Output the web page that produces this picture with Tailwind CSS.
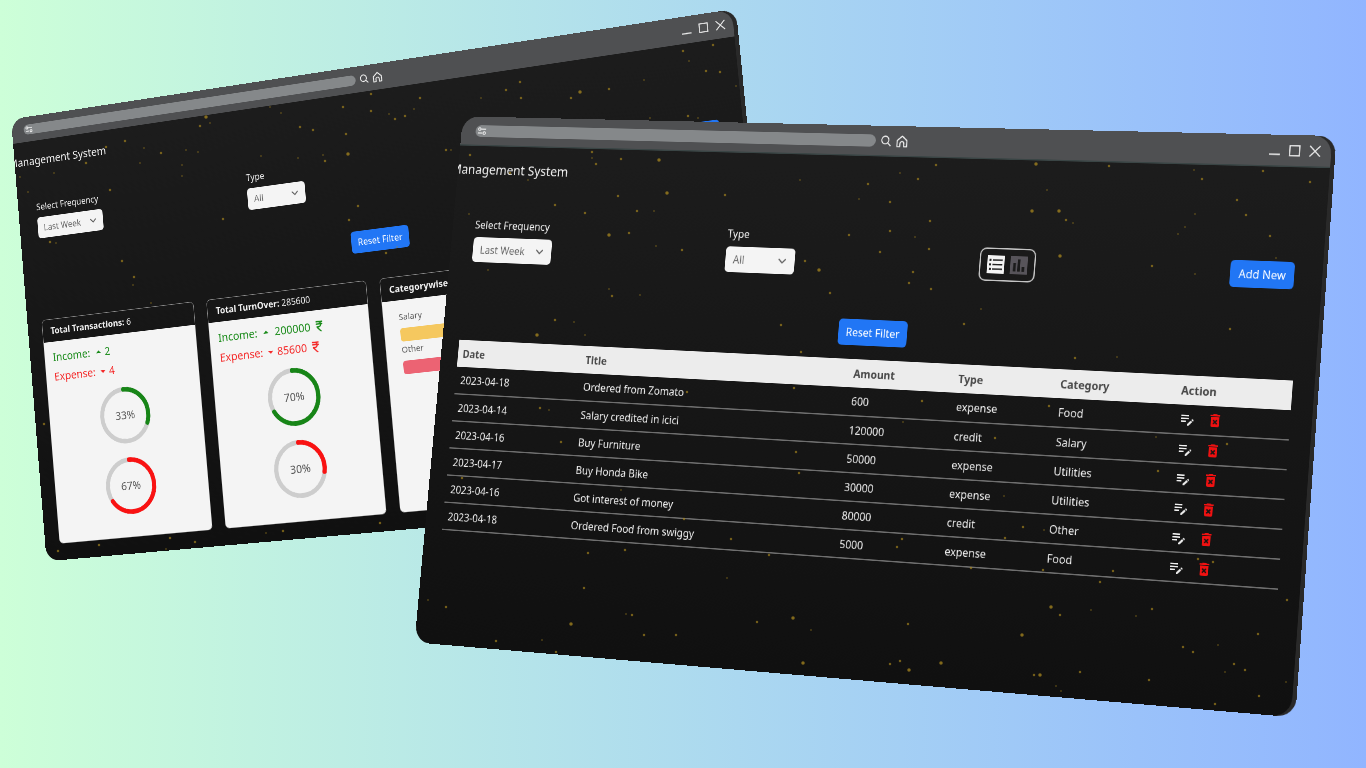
<!DOCTYPE html>
<html lang="en">
<head>
<meta charset="utf-8">
<meta name="viewport" content="width=device-width, initial-scale=1">
<title>Expense Management System</title>
<script src="https://cdn.jsdelivr.net/npm/@tailwindcss/browser@4"></script>
</head>
<body>
<svg class="hidden" aria-hidden="true">
  <symbol id="i-tune" viewBox="0 0 16 14"><g fill="none" stroke="#f1f1f1" stroke-width="1.6"><circle cx="4" cy="4" r="2"/><path d="M7 4h8M1 10h7"/><circle cx="12" cy="10" r="2"/></g></symbol>
  <symbol id="i-search" viewBox="0 0 16 16"><g fill="none" stroke="#f1f1f1" stroke-width="1.7"><circle cx="6.8" cy="6.8" r="5.6"/><path d="M10.8 10.8l4.6 4.6"/></g></symbol>
  <symbol id="i-home" viewBox="0 0 18 18"><path fill="none" stroke="#f1f1f1" stroke-width="1.7" stroke-linejoin="round" d="M1.5 8L9 1.5 16.500 8v9h-4.500v-4.500a3 3 0 0 0-6 0V17H1.500z"/></symbol>
  <symbol id="i-min" viewBox="0 0 16 16"><path stroke="#f1f1f1" stroke-width="1.800" d="M0 13.500h16"/></symbol>
  <symbol id="i-max" viewBox="0 0 16 16"><rect x="1" y="1" width="14" height="14" fill="none" stroke="#f1f1f1" stroke-width="1.700"/></symbol>
  <symbol id="i-close" viewBox="0 0 16 16"><path fill="none" stroke="#f1f1f1" stroke-width="1.700" d="M.5.5l15 15M15.500.5l-15 15"/></symbol>
  <symbol id="i-chev" viewBox="0 0 16 16"><path fill="none" stroke="#666" stroke-width="2" stroke-linecap="round" stroke-linejoin="round" d="M3 5.500l5 5 5-5"/></symbol>
  <symbol id="i-up" viewBox="0 0 24 24"><path fill="currentColor" d="M7 14l5-5 5 5z"/></symbol>
  <symbol id="i-down" viewBox="0 0 24 24"><path fill="currentColor" d="M7 10l5 5 5-5z"/></symbol>
  <symbol id="i-rupee" viewBox="0 0 24 24"><path fill="currentColor" stroke="currentColor" stroke-width=".5" d="M13.660 7c-.56-1.180-1.760-2-3.160-2H6V3h12v2h-3.260c.48.58.84 1.260 1.050 2H18v2h-2.020c-.25 2.800-2.610 5-5.480 5h-.73l6.730 7h-2.770L7 14v-2h3.500c1.760 0 3.220-1.300 3.460-3H6V7h7.660z"/></symbol>
  <symbol id="i-edit" viewBox="0 0 24 24"><path fill="#efefef" d="M3 10h11v2H3v-2zm0-2h11V6H3v2zm0 8h7v-2H3v2zm15.010-3.130.71-.71c.39-.39 1.020-.39 1.410 0l.71.71c.39.39.39 1.020 0 1.410l-.71.71-2.120-2.120zm-.71.71-5.300 5.300V21h2.120l5.300-5.300-2.120-2.120z"/></symbol>
  <symbol id="i-trash" viewBox="0 0 24 24"><path fill="#f01111" d="M6 19c0 1.100.9 2 2 2h8c1.100 0 2-.9 2-2V7H6v12zm2.460-7.120 1.410-1.410L12 12.590l2.120-2.120 1.410 1.410L13.410 14l2.120 2.120-1.410 1.410L12 15.410l-2.120 2.120-1.410-1.410L10.590 14l-2.130-2.120zM15.500 4l-1-1h-5l-1 1H5v2h14V4z"/></symbol>
</svg>

<main class="relative min-h-screen overflow-hidden bg-linear-to-r from-[#cdffd8] to-[#91b5ff] font-['Noto_Sans','Open_Sans',sans-serif] text-base text-[#f2f2f2]">

  <!-- Analytics window -->
  <section aria-label="Analytics view" class="absolute top-0 left-0 h-[800px] w-[1366px] origin-top-left overflow-hidden rounded-[26px] bg-[#292929] [transform:matrix3d(0.479612,-0.0815666,0,-0.00006928,0.043725,0.544675,0,-0.00001395,0,0,1,0,11.1,119.3,0,1)]">
    <div class="mr-[7px] flex h-full flex-col overflow-hidden rounded-[26px] bg-linear-to-b from-[#1d1d1d] to-[#101010]">
      <header class="flex h-[45px] shrink-0 items-center bg-[#4f5052] pr-[14px] pl-6">
        <div class="flex h-[18px] w-[657px] items-center rounded-full bg-[#85888a] pl-[3px]"><svg class="h-[14px] w-4"><use href="#i-tune"/></svg></div>
        <button aria-label="Search" class="ml-2"><svg class="size-4"><use href="#i-search"/></svg></button>
        <button aria-label="Home" class="ml-2"><svg class="size-[18px]"><use href="#i-home"/></svg></button>
        <div class="ml-auto flex gap-[13px]">
          <button aria-label="Minimize"><svg class="size-4"><use href="#i-min"/></svg></button>
          <button aria-label="Maximize"><svg class="size-4"><use href="#i-max"/></svg></button>
          <button aria-label="Close"><svg class="size-4"><use href="#i-close"/></svg></button>
        </div>
      </header>
      <nav class="flex h-[72px] items-center"><a href="#" class="-ml-3 text-xl">Management System</a></nav>
      <div class="mt-9 mr-10 ml-[37px] flex h-[85px] items-center justify-between">
        <div class="self-start"><label for="freq-a" class="block h-[31px] leading-6">Select Frequency</label>
          <div class="relative w-[133px]"><select id="freq-a" class="h-[38px] w-full appearance-none rounded-md bg-[#f4f4f4] px-3 text-[#6a6a6a]"><option>Last Week</option></select><svg class="pointer-events-none absolute top-[11px] right-3 size-4"><use href="#i-chev"/></svg></div></div>
        <div class="self-start"><label for="type-a" class="block h-[31px] leading-6">Type</label>
          <div class="relative w-[111px]"><select id="type-a" class="h-[38px] w-full appearance-none rounded-md bg-[#f4f4f4] px-3 text-[#6a6a6a]"><option>All</option></select><svg class="pointer-events-none absolute top-[11px] right-3 size-4"><use href="#i-chev"/></svg></div></div>
        <div class="w-[85px]"></div>
        <button class="h-[38px] rounded-md bg-[#2176f5] px-3 text-white">Add New</button>
      </div>
      <div class="mt-[45px] flex justify-center pl-[41px]"><button class="h-[38px] rounded-md bg-[#2176f5] px-3 text-white">Reset Filter</button></div>

      <div class="mt-12 mr-[30px] ml-[29px] grid grid-cols-4 gap-[25px]">
        <article class="flex h-[402px] flex-col overflow-hidden rounded-lg border border-[#8d8d8d]">
          <h2 class="h-10 shrink-0 px-4 py-2 leading-6"><b>Total Transactions:</b> 6</h2>
          <div class="grow bg-[#f4f4f4] p-4">
            <p class="flex h-6 items-center text-xl text-[#178a17]">Income: <svg class="ml-[5px] size-6"><use href="#i-up"/></svg><span>2</span></p>
            <p class="mt-[11px] flex h-6 items-center text-xl text-[#f42a2a]">Expense: <svg class="ml-[3px] size-6"><use href="#i-down"/></svg><span>4</span></p>
            <svg viewBox="0 0 100 100" class="mx-auto mt-5 size-[100px] text-xl" role="img" aria-label="33 percent"><circle cx="50" cy="50" r="46" fill="none" stroke="#cdcdcd" stroke-width="8"/><circle cx="50" cy="50" r="46" fill="none" stroke="#178517" stroke-width="8" stroke-linecap="round" pathLength="100" stroke-dasharray="31 100" transform="rotate(-90 50 50)"/><text x="50" y="57" text-anchor="middle" fill="#555">33%</text></svg>
            <svg viewBox="0 0 100 100" class="mx-auto mt-[25px] size-[100px] text-xl" role="img" aria-label="67 percent"><circle cx="50" cy="50" r="46" fill="none" stroke="#cdcdcd" stroke-width="8"/><circle cx="50" cy="50" r="46" fill="none" stroke="#f91212" stroke-width="8" stroke-linecap="round" pathLength="100" stroke-dasharray="66 100" transform="rotate(-90 50 50)"/><text x="50" y="57" text-anchor="middle" fill="#555">67%</text></svg>
          </div>
        </article>
        <article class="flex h-[402px] flex-col overflow-hidden rounded-lg border border-[#8d8d8d]">
          <h2 class="h-10 shrink-0 px-4 py-2 leading-6"><b>Total TurnOver:</b> 285600</h2>
          <div class="grow bg-[#f4f4f4] p-4">
            <p class="flex h-6 items-center text-xl text-[#178a17]">Income: <svg class="ml-[5px] size-6"><use href="#i-up"/></svg><span class="ml-1">200000</span><svg class="ml-[5px] size-6"><use href="#i-rupee"/></svg></p>
            <p class="mt-[11px] flex h-6 items-center text-xl text-[#f42a2a]">Expense: <svg class="ml-[3px] size-6"><use href="#i-down"/></svg><span>85600</span><svg class="ml-[5px] size-6"><use href="#i-rupee"/></svg></p>
            <svg viewBox="0 0 100 100" class="mx-auto mt-5 size-[100px] text-xl" role="img" aria-label="70 percent"><circle cx="50" cy="50" r="46" fill="none" stroke="#cdcdcd" stroke-width="8"/><circle cx="50" cy="50" r="46" fill="none" stroke="#178517" stroke-width="8" stroke-linecap="round" pathLength="100" stroke-dasharray="67 100" transform="rotate(-90 50 50)"/><text x="50" y="57" text-anchor="middle" fill="#555">70%</text></svg>
            <svg viewBox="0 0 100 100" class="mx-auto mt-[25px] size-[100px] text-xl" role="img" aria-label="30 percent"><circle cx="50" cy="50" r="46" fill="none" stroke="#cdcdcd" stroke-width="8"/><circle cx="50" cy="50" r="46" fill="none" stroke="#f91212" stroke-width="8" stroke-linecap="round" pathLength="100" stroke-dasharray="28 100" transform="rotate(-90 50 50)"/><text x="50" y="57" text-anchor="middle" fill="#555">30%</text></svg>
          </div>
        </article>
        <article class="flex h-[402px] flex-col overflow-hidden rounded-lg border border-[#8d8d8d]">
          <h2 class="h-10 shrink-0 px-4 py-2 leading-6"><b>Categorywise</b></h2>
          <div class="grow bg-[#f4f4f4] px-[29px] py-4 text-[15px] text-[#5c5c5c]">
            <p class="leading-6">Salary</p>
            <div class="mt-2 h-[23px] rounded-[5px] bg-[#f5c85f]"></div>
            <p class="mt-px leading-6">Other</p>
            <div class="mt-2 h-[23px] rounded-[5px] bg-[#ec6373]"></div>
          </div>
        </article>
      </div>
    </div>
  </section>

  <svg aria-hidden="true" class="pointer-events-none absolute top-0 left-0 h-[768px] w-[1366px]" fill="none" stroke-linecap="round" stroke="#a8871f">
    <path stroke-width="2" stroke-opacity=".4" d="M144 148h0M186 150h0M198 152h0M182 165h0M182 176h0M140 163h0M54 173h0M20 177h0M28 192h0M210 123h0M261 156h0M298 158h0M323 155h0M389 114h0M414 109h0M281 113h0M270 107h0M56 243h0M133 285h0M151 303h0M397 247h0M266 533h0M166 549h0M481 98h0M644 80h0M689 61h0M736 86h0M650 118h0M698 118h0M451 150h0"/>
    <path stroke-width="2.500" stroke-opacity=".65" d="M125 141h0M161 153h0M86 163h0M106 147h0M110 190h0M200 126h0M300 127h0M313 130h0M343 107h0M346 134h0M325 161h0M371 111h0M395 119h0M405 116h0M223 219h0M358 206h0M349 220h0M50 242h0M122 261h0M134 277h0M386 253h0M44 424h0M58 551h0M99 545h0M170 538h0M195 542h0M283 531h0M380 523h0M506 90h0M520 82h0M521 98h0M420 98h0M571 98h0M609 89h0M683 51h0M713 45h0M706 71h0M720 72h0M688 116h0M371 94h0M446 150h0"/>
    <path stroke-width="3.500" stroke-opacity=".75" d="M206 117h0M348 154h0M580 92h0"/>
  </svg>

  <!-- Transactions window -->
  <section aria-label="Transactions view" class="absolute top-0 left-0 h-[800px] w-[1366px] origin-top-left overflow-hidden rounded-[26px] bg-[#292929] [transform:matrix3d(0.547884,0.005095,0,-0.00006857,-0.0671375,0.6474125,0,-0.0000157075,0,0,1,0,463,116.3,0,1)]">
    <div class="mr-[6px] flex h-full flex-col overflow-hidden rounded-[26px] bg-linear-to-b from-[#1d1d1d] to-[#101010]">
      <header class="flex h-[45px] shrink-0 items-center border-b-2 border-[#3a4545] bg-[#4f5052] pr-[15px] pl-6">
        <div class="flex h-[18px] w-[657px] items-center rounded-full bg-[#85888a] pl-[3px]"><svg class="h-[14px] w-4"><use href="#i-tune"/></svg></div>
        <button aria-label="Search" class="ml-2"><svg class="size-4"><use href="#i-search"/></svg></button>
        <button aria-label="Home" class="ml-2"><svg class="size-[18px]"><use href="#i-home"/></svg></button>
        <div class="ml-auto flex gap-[13px]">
          <button aria-label="Minimize"><svg class="size-4"><use href="#i-min"/></svg></button>
          <button aria-label="Maximize"><svg class="size-4"><use href="#i-max"/></svg></button>
          <button aria-label="Close"><svg class="size-4"><use href="#i-close"/></svg></button>
        </div>
      </header>
      <nav class="flex h-[72px] items-center"><a href="#" class="-ml-3 text-xl">Management System</a></nav>
      <div class="mt-9 mr-10 ml-[38px] flex h-[85px] items-center justify-between">
        <div class="self-start"><label for="freq-b" class="block h-[31px] leading-6">Select Frequency</label>
          <div class="relative w-[133px]"><select id="freq-b" class="h-[38px] w-full appearance-none rounded-md bg-[#f4f4f4] px-3 text-[#6a6a6a]"><option>Last Week</option></select><svg class="pointer-events-none absolute top-[11px] right-3 size-4"><use href="#i-chev"/></svg></div></div>
        <div class="self-start"><label for="type-b" class="block h-[31px] leading-6">Type</label>
          <div class="relative w-[111px]"><select id="type-b" class="h-[38px] w-full appearance-none rounded-md bg-[#f4f4f4] px-3 text-[#6a6a6a]"><option>All</option></select><svg class="pointer-events-none absolute top-[11px] right-3 size-4"><use href="#i-chev"/></svg></div></div>
        <div class="flex h-[48px] w-[85px] items-center justify-center gap-[9px] rounded-[10px] border-2 border-[#c4c4c4]">
          <button aria-label="Table view"><svg viewBox="0 0 26 26" class="size-[26px]"><path fill="#f4f4f4" d="M0 0h26v26H0z"/><path fill="#222" d="M3 5h3v3H3zM3 11.500h3v3H3zM3 18h3v3H3zM8 5.500h15v2.200H8zM8 12h15v2.200H8zM8 18.500h15v2.200H8z"/></svg></button>
          <button aria-label="Chart view"><svg viewBox="0 0 26 26" class="size-[26px]"><path fill="#57545a" d="M0 0h26v26H0z"/><path fill="#1b1b1b" d="M4.500 10h4v12h-4zM11 4.500h4V22h-4zM17.500 15h4v7h-4z"/></svg></button>
        </div>
        <button class="h-[38px] rounded-md bg-[#2176f5] px-3 text-white">Add New</button>
      </div>
      <div class="mt-[45px] flex justify-center pl-[41px]"><button class="h-[38px] rounded-md bg-[#2176f5] px-3 text-white">Reset Filter</button></div>

      <div class="mt-5 mr-[31px] ml-[29px]">
        <table class="w-full table-fixed text-left leading-6">
          <colgroup><col class="w-[207px]"><col class="w-[432px]"><col class="w-[162px]"><col class="w-[154px]"><col class="w-[178px]"><col></colgroup>
          <thead class="bg-[#ececec] text-[#484848]"><tr class="h-[41px]"><th class="px-2">Date</th><th class="px-2">Title</th><th class="px-2">Amount</th><th class="px-2">Type</th><th class="px-2">Category</th><th class="px-2">Action</th></tr></thead>
          <tbody>
            <tr class="h-[41px] border-b-2 border-[#6e6e6e]"><td class="px-2">2023-04-18</td><td class="px-2">Ordered from Zomato</td><td class="px-2">600</td><td class="px-2">expense</td><td class="px-2">Food</td><td class="px-2"><div class="flex gap-4"><button aria-label="Edit"><svg class="size-6"><use href="#i-edit"/></svg></button><button aria-label="Delete"><svg class="size-6"><use href="#i-trash"/></svg></button></div></td></tr>
            <tr class="h-[41px] border-b-2 border-[#6e6e6e]"><td class="px-2">2023-04-14</td><td class="px-2">Salary credited in icici</td><td class="px-2">120000</td><td class="px-2">credit</td><td class="px-2">Salary</td><td class="px-2"><div class="flex gap-4"><button aria-label="Edit"><svg class="size-6"><use href="#i-edit"/></svg></button><button aria-label="Delete"><svg class="size-6"><use href="#i-trash"/></svg></button></div></td></tr>
            <tr class="h-[41px] border-b-2 border-[#6e6e6e]"><td class="px-2">2023-04-16</td><td class="px-2">Buy Furniture</td><td class="px-2">50000</td><td class="px-2">expense</td><td class="px-2">Utilities</td><td class="px-2"><div class="flex gap-4"><button aria-label="Edit"><svg class="size-6"><use href="#i-edit"/></svg></button><button aria-label="Delete"><svg class="size-6"><use href="#i-trash"/></svg></button></div></td></tr>
            <tr class="h-[41px] border-b-2 border-[#6e6e6e]"><td class="px-2">2023-04-17</td><td class="px-2">Buy Honda Bike</td><td class="px-2">30000</td><td class="px-2">expense</td><td class="px-2">Utilities</td><td class="px-2"><div class="flex gap-4"><button aria-label="Edit"><svg class="size-6"><use href="#i-edit"/></svg></button><button aria-label="Delete"><svg class="size-6"><use href="#i-trash"/></svg></button></div></td></tr>
            <tr class="h-[41px] border-b-2 border-[#6e6e6e]"><td class="px-2">2023-04-16</td><td class="px-2">Got interest of money</td><td class="px-2">80000</td><td class="px-2">credit</td><td class="px-2">Other</td><td class="px-2"><div class="flex gap-4"><button aria-label="Edit"><svg class="size-6"><use href="#i-edit"/></svg></button><button aria-label="Delete"><svg class="size-6"><use href="#i-trash"/></svg></button></div></td></tr>
            <tr class="h-[41px] border-b-2 border-[#6e6e6e]"><td class="px-2">2023-04-18</td><td class="px-2">Ordered Food from swiggy</td><td class="px-2">5000</td><td class="px-2">expense</td><td class="px-2">Food</td><td class="px-2"><div class="flex gap-4"><button aria-label="Edit"><svg class="size-6"><use href="#i-edit"/></svg></button><button aria-label="Delete"><svg class="size-6"><use href="#i-trash"/></svg></button></div></td></tr>
          </tbody>
        </table>
      </div>
    </div>
  </section>

  <svg aria-hidden="true" class="pointer-events-none absolute top-0 left-0 h-[768px] w-[1366px]" fill="none" stroke-linecap="round" stroke="#a8871f">
    <path stroke-width="2" stroke-opacity=".4" d="M592 158h0M528 180h0M654 211h0M469 214h0M656 246h0M488 270h0M609 289h0M640 295h0M574 322h0M585 335h0M800 180h0M859 199h0M1047 190h0M1073 223h0M981 309h0M1117 357h0M1194 170h0M1195 214h0M1185 227h0M1178 234h0M900 173h0M915 237h0M1195 274h0M1276 258h0M549 410h0M727 578h0M626 614h0M811 630h0M542 640h0M1044 530h0M903 422h0M1004 496h0M1091 610h0M1136 616h0M1218 645h0M1225 672h0M1056 686h0M1061 691h0M621 490h0M1156 437h0M1286 682h0M428 600h0"/>
    <path stroke-width="2.500" stroke-opacity=".65" d="M470 155h0M596 164h0M592 152h0M621 159h0M510 173h0M618 196h0M725 195h0M555 205h0M585 213h0M637 211h0M629 233h0M682 250h0M612 296h0M555 320h0M805 261h0M830 293h0M781 325h0M801 352h0M868 184h0M890 202h0M890 231h0M849 235h0M880 252h0M918 179h0M936 165h0M1109 166h0M1066 220h0M930 221h0M929 249h0M913 272h0M909 283h0M931 289h0M1152 266h0M964 324h0M1075 358h0M1230 329h0M1263 171h0M1310 182h0M1202 179h0M1237 200h0M1246 215h0M1270 236h0M687 392h0M540 408h0M561 442h0M794 388h0M796 452h0M799 473h0M684 519h0M731 539h0M588 553h0M625 550h0M769 555h0M584 588h0M446 607h0M632 615h0M496 641h0M556 652h0M644 635h0M676 635h0M757 622h0M462 478h0M922 401h0M995 438h0M1049 406h0M1227 444h0M1158 471h0M1023 527h0M1005 538h0M902 539h0M897 547h0M971 568h0M1043 570h0M1113 571h0M1100 582h0M1198 559h0M1213 562h0M1060 615h0M1152 609h0M1287 600h0M1258 634h0M1183 647h0M1193 652h0M908 624h0M900 661h0M890 664h0M1034 675h0M1080 672h0M1149 680h0M1234 664h0M1245 670h0M1259 696h0M1215 704h0"/>
    <path stroke-width="3.500" stroke-opacity=".75" d="M659 160h0M667 193h0M609 235h0M819 270h0M537 335h0M1036 164h0M1032 211h0M1059 211h0M1060 256h0M571 624h0M793 618h0M803 663h0M1051 607h0M1022 635h0M941 663h0M909 670h0M1040 675h0"/>
  </svg>
</main>
</body>
</html>
